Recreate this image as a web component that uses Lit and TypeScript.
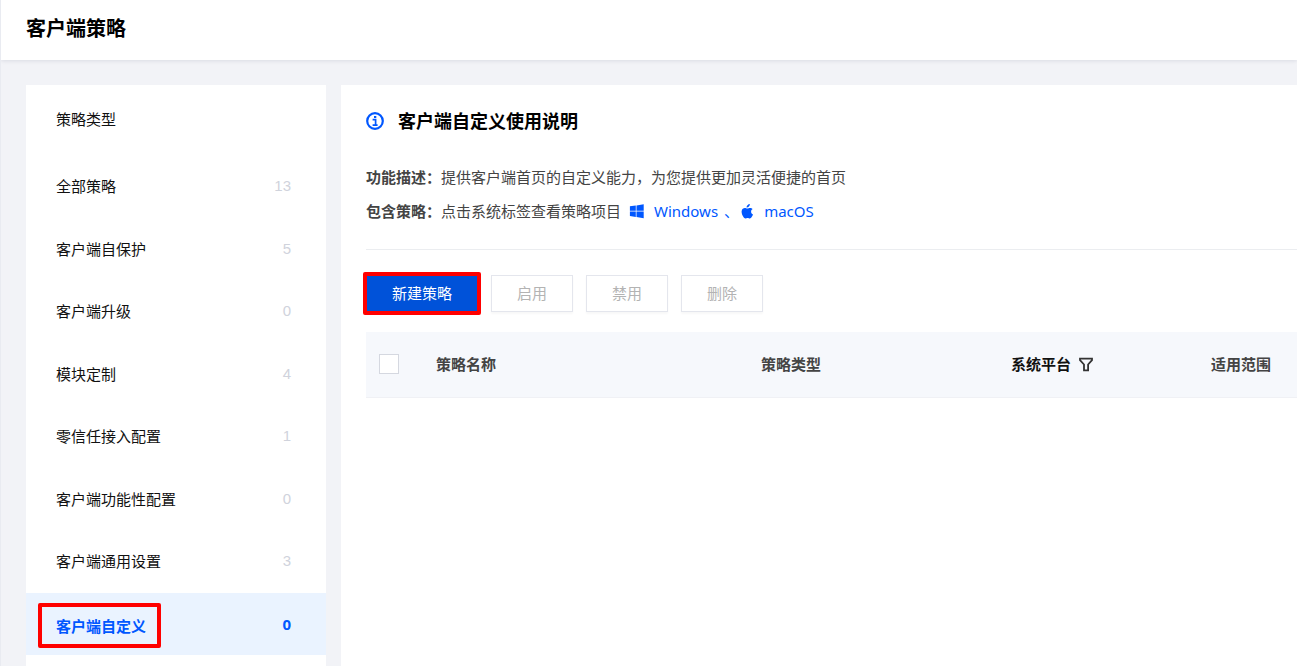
import { LitElement, html, css } from "lit";
import { customElement, state } from "lit/decorators.js";
import { classMap } from "lit/directives/class-map.js";

interface Category {
  name: string;
  count: number;
}

@customElement("app-root")
export class AppRoot extends LitElement {
  static styles = css`
    :host {
      display: flex;
      flex-direction: column;
      box-sizing: border-box;
      height: 100vh;
      overflow: hidden;
      border-left: 1px solid #e9ebf1;
      background: #f2f3f7;
      color: #444;
      font: 15px/20px "Noto Sans", "Noto Sans CJK SC", sans-serif;
    }
    * {
      box-sizing: border-box;
    }
    .topbar {
      flex: none;
      height: 60px;
      padding: 0 25px;
      background: #fff;
      box-shadow: 0 1px 4px rgba(0, 21, 60, 0.1);
    }
    .title {
      margin: 0;
      font-size: 20px;
      line-height: 58px;
      color: #000;
    }
    .body {
      flex: 1;
      display: flex;
      gap: 15px;
      min-height: 0;
      padding: 25px 0 0 25px;
    }
    .sidebar {
      flex: 0 0 300px;
      background: #fff;
      color: #111;
      overflow: hidden;
    }
    .sidebar-title {
      margin: 0;
      padding: 0 30px 2px;
      font-size: 15px;
      font-weight: 400;
      line-height: 68px;
    }
    .list {
      display: grid;
      grid-auto-rows: 1fr;
      min-height: 500px;
      margin: 0;
      padding: 0;
      list-style: none;
    }
    .item {
      display: flex;
      align-items: center;
      justify-content: space-between;
      width: 100%;
      height: 100%;
      padding: 0 35px 0 30px;
      border: 0;
      background: none;
      color: inherit;
      font: inherit;
      text-align: left;
      cursor: pointer;
    }
    .count {
      color: #d0d3dc;
      font-family: "Liberation Sans", sans-serif;
    }
    .label {
      position: relative;
    }
    .active {
      background: #eaf3ff;
      color: #0057ff;
      font-weight: 700;
    }
    .active .count {
      color: inherit;
      font-family: "Noto Sans", sans-serif;
    }
    .active .label {
      padding-top: 4px;
    }
    .active .label::after {
      content: "";
      position: absolute;
      inset: -9px -15px -12px -18px;
      border: 4px solid #f00;
      border-radius: 2px;
    }
    .main {
      flex: 1;
      min-width: 0;
      padding: 24px 0 0 25px;
      background: #fff;
      overflow: hidden;
    }
    .intro {
      padding-bottom: 28px;
      border-bottom: 1px solid #ebedf0;
    }
    .heading {
      display: flex;
      align-items: center;
      gap: 14px;
      margin: 0 0 34px;
      color: #000;
      font-size: 18px;
      line-height: 24px;
    }
    .info {
      width: 18px;
      height: 18px;
    }
    .line {
      display: flex;
      align-items: center;
      margin: 0 0 14px;
    }
    .line:last-child {
      margin: 0;
    }
    .system {
      display: inline-flex;
      align-items: center;
      gap: 9px;
      margin-left: 8px;
      color: #0057ff;
      text-decoration: none;
    }
    .sep + .system {
      margin-left: 0;
    }
    .system svg {
      width: 16px;
      height: 16px;
    }
    .sep {
      margin-left: 6px;
      color: #0057ff;
    }
    .toolbar {
      display: flex;
      gap: 13px;
      padding: 25px 0 20px;
    }
    .btn {
      position: relative;
      height: 37px;
      padding: 0 25px 1px;
      border: 1px solid #e4e6ed;
      background: #fff;
      box-shadow: 0 2px 2px rgba(0, 0, 0, 0.03);
      color: #b3b3b3;
      font: inherit;
    }
    .primary {
      border-color: #0052d9;
      background: #0052d9;
      color: #fff;
      cursor: pointer;
    }
    .primary::after {
      content: "";
      position: absolute;
      inset: -4px;
      border: 4px solid #f00;
      border-radius: 2px;
    }
    .table {
      width: 100%;
      table-layout: fixed;
      border-collapse: collapse;
    }
    .table th {
      height: 65px;
      padding: 0 0 0 20px;
      border-bottom: 1px solid #f0f1f5;
      background: #f6f8fc;
      text-align: left;
      font-weight: 700;
      white-space: nowrap;
    }
    .table .check-cell {
      width: 50px;
      padding-left: 13px;
    }
    .name-cell {
      width: 325px;
    }
    .type-cell {
      width: 250px;
    }
    .table .platform-cell {
      width: 200px;
      color: #111;
    }
    .check {
      appearance: none;
      display: block;
      width: 20px;
      height: 20px;
      margin: 0;
      border: 1px solid #d5d8e0;
      background: #fff;
    }
    .filter {
      display: flex;
      align-items: center;
      gap: 7px;
      padding: 0;
      border: 0;
      background: none;
      color: inherit;
      font: inherit;
    }
    .filter svg {
      width: 16px;
      height: 16px;
    }
  `;

  @state() private selected = 7;

  private categories: Category[] = [
    { name: "全部策略", count: 13 },
    { name: "客户端自保护", count: 5 },
    { name: "客户端升级", count: 0 },
    { name: "模块定制", count: 4 },
    { name: "零信任接入配置", count: 1 },
    { name: "客户端功能性配置", count: 0 },
    { name: "客户端通用设置", count: 3 },
    { name: "客户端自定义", count: 0 },
  ];

  render() {
    return html`
      <header class="topbar"><h1 class="title">客户端策略</h1></header>
      <div class="body">
        <nav class="sidebar" aria-labelledby="types">
          <h2 class="sidebar-title" id="types">策略类型</h2>
          <ul class="list">
            ${this.categories.map(
              (c, i) => html`<li>
                <button
                  class=${classMap({ item: true, active: i === this.selected })}
                  @click=${() => (this.selected = i)}
                >
                  <span class="label">${c.name}</span><span class="count">${c.count}</span>
                </button>
              </li>`
            )}
          </ul>
        </nav>
        <main class="main">
          <section class="intro">
            <h2 class="heading">
              <svg class="info" viewBox="0 0 18 18" fill="none" stroke="#0057ff" aria-hidden="true">
                <circle cx="9" cy="9" r="7.8" stroke-width="2.2" />
                <path d="M6.6 7.7h3v5.5M6.6 13.2h5" stroke-width="1.7" />
                <path d="M8 5h2.3" stroke-width="2" />
              </svg>
              客户端自定义使用说明
            </h2>
            <p class="line"><b>功能描述：</b>提供客户端首页的自定义能力，为您提供更加灵活便捷的首页</p>
            <p class="line">
              <b>包含策略：</b>点击系统标签查看策略项目
              <a class="system" href="#windows">
                <svg viewBox="0 0 16 16" fill="#0057ff" aria-hidden="true">
                  <path d="M.9 3.3 6.8 2.5V7.7H.9zM7.5 2.4 14.7 1.3V7.7H7.5zM.9 8.5H6.8V13.9L.9 13zM7.5 8.5H14.7V15.2L7.5 14z" />
                </svg>Windows</a>
              <span class="sep">、</span>
              <a class="system" href="#macos">
                <svg viewBox="0 0 16 16" fill="#0057ff" aria-hidden="true">
                  <path d="M10.8 1.1c.1 1-.3 1.9-.9 2.5-.6.7-1.5 1.1-2.3 1-.1-.9.3-1.8.9-2.4.6-.7 1.6-1.1 2.3-1.1zM13.7 6.1c-1 .6-1.6 1.5-1.6 2.6 0 1.3.8 2.3 1.9 2.8-.3.9-.7 1.6-1.2 2.3-.6.9-1.2 1.6-2.1 1.6-.8 0-1.1-.5-2.1-.5s-1.3.5-2.1.5c-.9 0-1.6-.8-2.2-1.7C2.7 11.5 2.1 8.6 3 6.8c.6-1.2 1.7-1.9 2.8-1.9 1 0 1.7.6 2.6.6.8 0 1.5-.6 2.7-.6 1 0 2 .4 2.6 1.2z" />
                </svg>macOS</a>
            </p>
          </section>
          <div class="toolbar">
            <button class="btn primary">新建策略</button>
            <button class="btn" disabled>启用</button>
            <button class="btn" disabled>禁用</button>
            <button class="btn" disabled>删除</button>
          </div>
          <table class="table">
            <thead>
              <tr>
                <th class="check-cell"><input class="check" type="checkbox" aria-label="全选" /></th>
                <th class="name-cell">策略名称</th>
                <th class="type-cell">策略类型</th>
                <th class="platform-cell">
                  <button class="filter">
                    系统平台
                    <svg viewBox="0 0 16 16" fill="none" stroke="#333" stroke-width="1.8" aria-hidden="true">
                      <path d="M2 2.7H14V4.2L10.1 8.5V14.3H6V8.5L2 4.2z" />
                    </svg>
                  </button>
                </th>
                <th>适用范围</th>
              </tr>
            </thead>
          </table>
        </main>
      </div>
    `;
  }
}
